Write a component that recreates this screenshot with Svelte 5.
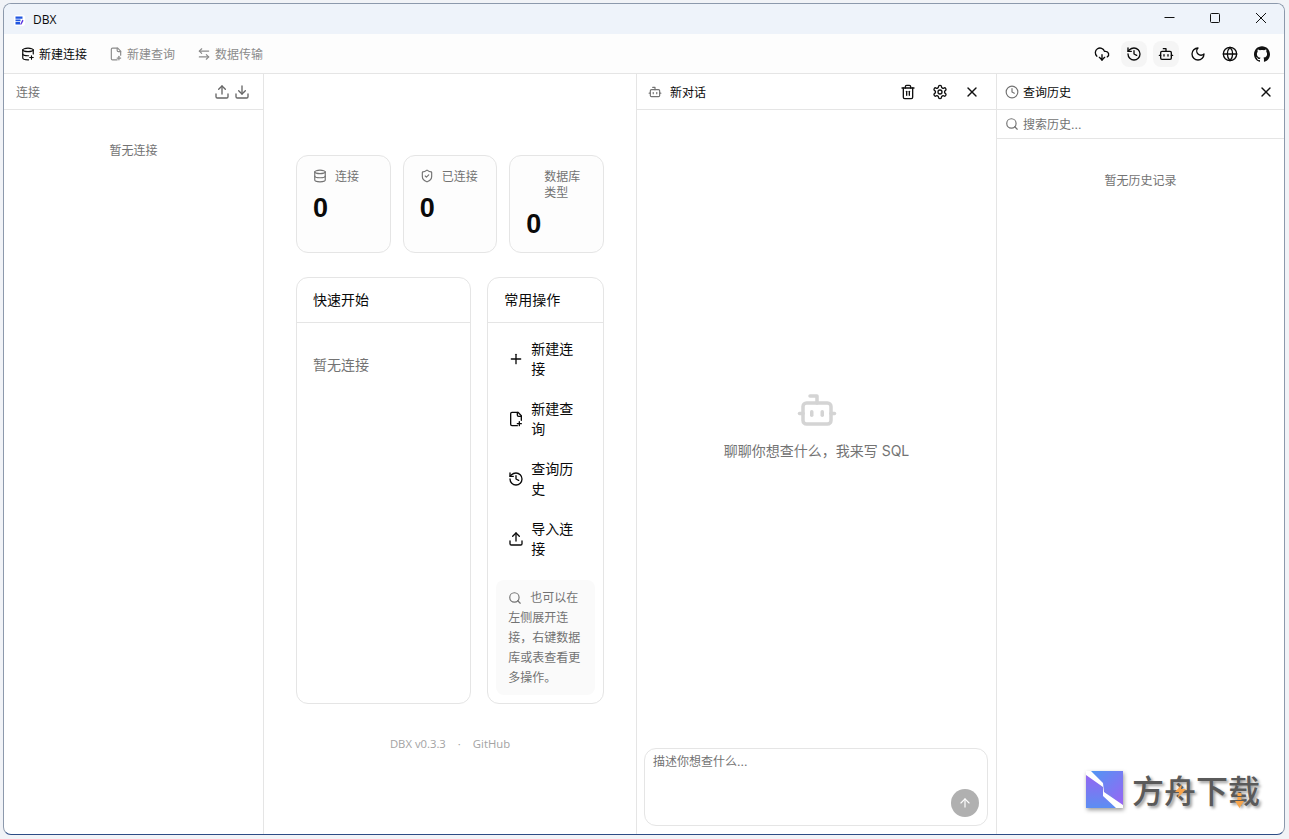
<script>
  const circle = (cx, cy, r) => `M${cx - r} ${cy}a${r} ${r} 0 1 0 ${2 * r} 0a${r} ${r} 0 1 0 ${-2 * r} 0`;
  const ICONS = {
    dbplus: ['M3 5a9 3 0 1 0 18 0a9 3 0 1 0-18 0', 'M3 5v14c0 1.7 4 3 9 3h1', 'M21 5v7', 'M3 12c0 1.7 4 3 9 3h1', 'M18 15v6', 'M15 18h6'],
    db: ['M3 5a9 3 0 1 0 18 0a9 3 0 1 0-18 0', 'M3 5V19A9 3 0 0 0 21 19V5', 'M3 12A9 3 0 0 0 21 12'],
    fileplus: ['M20 14V7l-5-5H6a2 2 0 0 0-2 2v16a2 2 0 0 0 2 2h8', 'M14 2v4a2 2 0 0 0 2 2h4', 'M14 19h6', 'M17 16v6'],
    swap: ['M8 3 4 7l4 4', 'M4 7h16', 'm16 21 4-4-4-4', 'M20 17H4'],
    upload: ['M21 15v4a2 2 0 0 1-2 2H5a2 2 0 0 1-2-2v-4', 'M17 8 12 3 7 8', 'M12 3v12'],
    download: ['M21 15v4a2 2 0 0 1-2 2H5a2 2 0 0 1-2-2v-4', 'M7 10l5 5 5-5', 'M12 15V3'],
    cloud: ['M12 13v8l-4-4', 'm12 21 4-4', 'M4.393 15.269A7 7 0 1 1 15.71 8h1.79a4.5 4.5 0 0 1 2.436 8.284'],
    history: ['M3 12a9 9 0 1 0 9-9 9.75 9.75 0 0 0-6.74 2.74L3 8', 'M3 3v5h5', 'M12 7v5l4 2'],
    bot: ['M12 8V4H8', 'M6 8h12a2 2 0 0 1 2 2v8a2 2 0 0 1-2 2H6a2 2 0 0 1-2-2v-8a2 2 0 0 1 2-2z', 'M2 14h2', 'M20 14h2', 'M15 13v2', 'M9 13v2'],
    moon: ['M12 3a6 6 0 0 0 9 9 9 9 0 1 1-9-9Z'],
    globe: [circle(12, 12, 10), 'M12 2a14.5 14.5 0 0 0 0 20 14.5 14.5 0 0 0 0-20', 'M2 12h20'],
    trash: ['M3 6h18', 'M19 6v14c0 1-1 2-2 2H7c-1 0-2-1-2-2V6', 'M8 6V4c0-1 1-2 2-2h4c1 0 2 1 2 2v2', 'M10 11v6', 'M14 11v6'],
    gear: ['M12.22 2h-.44a2 2 0 0 0-2 2v.18a2 2 0 0 1-1 1.73l-.43.25a2 2 0 0 1-2 0l-.15-.08a2 2 0 0 0-2.73.73l-.22.38a2 2 0 0 0 .73 2.73l.15.1a2 2 0 0 1 1 1.72v.51a2 2 0 0 1-1 1.74l-.15.09a2 2 0 0 0-.73 2.73l.22.38a2 2 0 0 0 2.73.73l.15-.08a2 2 0 0 1 2 0l.43.25a2 2 0 0 1 1 1.73V20a2 2 0 0 0 2 2h.44a2 2 0 0 0 2-2v-.18a2 2 0 0 1 1-1.73l.43-.25a2 2 0 0 1 2 0l.15.08a2 2 0 0 0 2.73-.73l.22-.39a2 2 0 0 0-.73-2.73l-.15-.08a2 2 0 0 1-1-1.74v-.5a2 2 0 0 1 1-1.74l.15-.09a2 2 0 0 0 .73-2.73l-.22-.38a2 2 0 0 0-2.73-.73l-.15.08a2 2 0 0 1-2 0l-.43-.25a2 2 0 0 1-1-1.73V4a2 2 0 0 0-2-2z', circle(12, 12, 3)],
    x: ['M18 6 6 18', 'm6 6 12 12'],
    clock: [circle(12, 12, 10), 'M12 6v6l4 2'],
    search: [circle(11, 11, 8), 'm21 21-4.3-4.3'],
    plus: ['M5 12h14', 'M12 5v14'],
    shield: ['M20 13c0 5-3.5 7.5-7.66 8.95a1 1 0 0 1-.67-.01C7.5 20.5 4 18 4 13V6a1 1 0 0 1 1-1c2 0 4.5-1.2 6.24-2.72a1.17 1.17 0 0 1 1.52 0C14.51 3.81 17 5 19 5a1 1 0 0 1 1 1z', 'm9 12 2 2 4-4'],
    up: ['m5 12 7-7 7 7', 'M12 19V5']
  };
  const GITHUB = 'M12 .297c-6.63 0-12 5.373-12 12 0 5.303 3.438 9.8 8.205 11.385.6.113.82-.258.82-.577 0-.285-.01-1.04-.015-2.04-3.338.724-4.042-1.61-4.042-1.61C4.422 18.07 3.633 17.7 3.633 17.7c-1.087-.744.084-.729.084-.729 1.205.084 1.838 1.236 1.838 1.236 1.07 1.835 2.809 1.305 3.495.998.108-.776.417-1.305.76-1.605-2.665-.3-5.466-1.332-5.466-5.93 0-1.31.465-2.38 1.235-3.22-.135-.303-.54-1.523.105-3.176 0 0 1.005-.322 3.3 1.23.96-.267 1.98-.399 3-.405 1.02.006 2.04.138 3 .405 2.28-1.552 3.285-1.23 3.285-1.23.645 1.653.24 2.873.12 3.176.765.84 1.23 1.91 1.23 3.22 0 4.61-2.805 5.625-5.475 5.92.42.36.81 1.096.81 2.22 0 1.606-.015 2.896-.015 3.286 0 .315.21.69.825.57C20.565 22.092 24 17.592 24 12.297c0-6.627-5.373-12-12-12';

  const tools = [
    { icon: 'dbplus', label: '新建连接' },
    { icon: 'fileplus', label: '新建查询', off: true },
    { icon: 'swap', label: '数据传输', off: true }
  ];
  const actions = [
    { icon: 'plus', label: '新建连接' },
    { icon: 'fileplus', label: '新建查询' },
    { icon: 'history', label: '查询历史' },
    { icon: 'upload', label: '导入连接' }
  ];
</script>

{#snippet icon(name, size = 16)}
  <svg class="ic" width={size} height={size} viewBox="0 0 24 24" fill="none" stroke="currentColor" stroke-width="2" stroke-linecap="round" stroke-linejoin="round">
    {#each ICONS[name] as d}<path {d} />{/each}
  </svg>
{/snippet}

<div class="win">
  <header class="title">
    <div class="title-left">
      <span class="app-logo">
        <svg width="11" height="11" viewBox="0 0 11 11">
          <rect width="11" height="11" rx="2.5" fill="#fff" />
          <path d="M1.5 1.5h7v2.2h-7zM1.5 4.4h5v1.8h-5zM1.5 7h4.5v2.6h-4.5z" fill="#1f55e0" />
          <path d="M8.5 4.6l1 1.2-2 3.8H6z" fill="#5a35e0" />
        </svg>
      </span>
      <span class="app-name">DBX</span>
    </div>
    <div class="controls">
      <span class="ctl"><svg width="12" height="12" viewBox="0 0 12 12"><path d="M1.5 5.5h10" stroke="#111" fill="none" /></svg></span>
      <span class="ctl"><svg width="12" height="12" viewBox="0 0 12 12"><rect x="1.5" y="1.5" width="9" height="9" rx="1" stroke="#111" fill="none" /></svg></span>
      <span class="ctl"><svg width="12" height="12" viewBox="0 0 12 12"><path d="M1 1l10 10M11 1L1 11" stroke="#111" fill="none" /></svg></span>
    </div>
  </header>

  <div class="toolbar">
    <div class="tools">
      {#each tools as t}
        <span class="tool" class:off={t.off}>{@render icon(t.icon, 14)}<span class="nudge">{t.label}</span></span>
      {/each}
    </div>
    <div class="tb-right">
      <span class="tb-btn">{@render icon('cloud')}</span>
      <span class="tb-btn on">{@render icon('history')}</span>
      <span class="tb-btn on">{@render icon('bot')}</span>
      <span class="tb-btn">{@render icon('moon')}</span>
      <span class="tb-btn">{@render icon('globe')}</span>
      <span class="tb-btn">
        <svg width="16" height="16" viewBox="0 0 24 24" fill="#111"><path d={GITHUB} /></svg>
      </span>
    </div>
  </div>

  <div class="cols">
    <aside class="side">
      <div class="phead side-head">
        <span class="muted nudge2">连接</span>
        <span class="head-icons muted2">{@render icon('upload')}{@render icon('download')}</span>
      </div>
      <div class="side-empty">暂无连接</div>
    </aside>

    <main class="main">
      <div class="stats">
        <div class="stat">
          <div class="stat-label">{@render icon('db', 14)}<span class="lab">连接</span></div>
          <div class="stat-value">0</div>
        </div>
        <div class="stat">
          <div class="stat-label">{@render icon('shield', 14)}<span class="lab">已连接</span></div>
          <div class="stat-value">0</div>
        </div>
        <div class="stat">
          <div class="stat-label"><span class="ghost"></span><span class="lab">数据库类型</span></div>
          <div class="stat-value">0</div>
        </div>
      </div>

      <div class="panels">
        <section class="panel">
          <h3>快速开始</h3>
          <div class="quick">暂无连接</div>
        </section>
        <section class="panel">
          <h3>常用操作</h3>
          <div class="acts">
            {#each actions as a}
              <div class="act">{@render icon(a.icon, 16)}<span>{a.label}</span></div>
            {/each}
            <p class="hint"><span class="hint-ic">{@render icon('search', 14)}</span>也可以在左侧展开连接，右键数据库或表查看更多操作。</p>
          </div>
        </section>
      </div>

      <footer class="foot"><span>DBX v0.3.3</span><span>·</span><span>GitHub</span></footer>
    </main>

    <section class="chat">
      <div class="phead chat-head">
        <span class="chat-title"><span class="muted">{@render icon('bot', 14)}</span><span class="nudge">新对话</span></span>
        <span class="chat-btns">{@render icon('trash')}{@render icon('gear')}{@render icon('x')}</span>
      </div>
      <div class="chat-body">
        <span class="big-bot">{@render icon('bot', 42)}</span>
        <p>聊聊你想查什么，我来写 SQL</p>
      </div>
      <div class="chat-input">
        <div class="box">
          <textarea placeholder="描述你想查什么..."></textarea>
          <span class="send">{@render icon('up', 14)}</span>
        </div>
      </div>
    </section>

    <aside class="hist">
      <div class="phead">
        <span class="chat-title hist-title"><span class="muted">{@render icon('clock', 14)}</span><span class="nudge">查询历史</span></span>
        <span class="hist-x">{@render icon('x')}</span>
      </div>
      <div class="hist-search"><span class="muted">{@render icon('search', 14)}</span><span class="muted nudge">搜索历史...</span></div>
      <div class="hist-empty">暂无历史记录</div>
    </aside>
  </div>

  <div class="mark">
    <svg class="mark-logo" width="37" height="37" viewBox="0 0 37 37">
      <defs>
        <linearGradient id="mkA" x1="0" y1="0" x2="1" y2="1">
          <stop offset="0" stop-color="#4b9af3" />
          <stop offset="1" stop-color="#9d62f3" />
        </linearGradient>
        <linearGradient id="mkB" x1="0" y1="0" x2="0" y2="1">
          <stop offset="0" stop-color="#9a62f2" />
          <stop offset="1" stop-color="#5c8ef2" />
        </linearGradient>
      </defs>
      <path d="M0 0h37v37z" fill="url(#mkA)" />
      <path d="M0 0v37h37z" fill="url(#mkB)" />
      <path d="M0 0h5l12 12 1 9 19 13v3h-7L17 25v-9L0 4z" fill="#fff" />
    </svg>
    <span class="mark-text">方舟下载</span>
    <svg class="bolt" width="11" height="14" viewBox="0 0 11 14"><path d="M7 0L0 8h4l-1 6 8-9H6z" fill="#f6a44c" /></svg>
    <svg class="arrow" width="9" height="15" viewBox="0 0 9 15"><path d="M2.5 0h4v3h-4zM2.5 4h4v3h-4zM0 8h9l-4.5 7z" fill="#f6a44c" /></svg>
  </div>
</div>

<style>
  :global(body) {
    margin: 0;
    background: #f1f3f7;
    overflow: hidden;
  }
  .ic { display: block; flex: none; }
  .nudge { margin-top: 2px; }
  .nudge2 { margin-top: 3px; }

  .win {
    position: relative;
    box-sizing: border-box;
    width: 1282px;
    height: 832px;
    margin: 3px 0 0 3px;
    display: flex;
    flex-direction: column;
    background: #fff;
    border: 1px solid #8c99ac;
    border-bottom-color: #2c4c85;
    border-radius: 8px;
    overflow: hidden;
    font-family: "Inter", "Noto Sans CJK SC", sans-serif;
    font-size: 12px;
    line-height: 16px;
    color: #0a0a0a;
  }

  .title {
    flex: none;
    height: 30px;
    display: flex;
    justify-content: space-between;
    background: #eef3fa;
  }
  .title-left { display: flex; align-items: center; padding-left: 10px; }
  .app-logo { display: flex; margin-top: 2px; }
  .app-name { margin-left: 8px; font-family: "Open Sans", sans-serif; margin-top: 1px; }
  .controls { display: flex; }
  .ctl { width: 46px; display: flex; align-items: center; justify-content: center; padding-bottom: 2px; box-sizing: border-box; }

  .toolbar {
    flex: none;
    height: 40px;
    box-sizing: border-box;
    display: flex;
    justify-content: space-between;
    align-items: center;
    padding: 0 9px;
    background: #fdfdfd;
    border-bottom: 1px solid #e5e5e5;
  }
  .tools { display: flex; gap: 6px; }
  .tool { display: flex; align-items: center; gap: 4px; padding: 4px 8px; }
  .tool.off { color: #8b8b8b; }
  .tb-right { display: flex; gap: 6px; }
  .tb-btn { width: 26px; height: 26px; display: flex; align-items: center; justify-content: center; border-radius: 8px; }
  .tb-btn.on { background: #f5f5f5; }

  .cols {
    flex: 1;
    min-height: 0;
    display: grid;
    grid-template-columns: 260px 373px 360px 287px;
  }
  .side, .main, .chat { border-right: 1px solid #e5e5e5; }
  .side, .main, .chat, .hist { box-sizing: border-box; min-width: 0; }

  .phead {
    height: 36px;
    box-sizing: border-box;
    display: flex;
    align-items: center;
    justify-content: space-between;
    padding: 0 12px;
    border-bottom: 1px solid #e5e5e5;
  }
  .side-head { padding-right: 13px; }
  .muted { color: #737373; }
  .muted2 { color: #666; }
  .head-icons { display: flex; gap: 4px; }
  .side-empty { margin-top: 33px; text-align: center; color: #737373; }

  .main { padding: 81px 32px 0; }
  .stats { display: grid; grid-template-columns: repeat(3, 1fr); gap: 12px; }
  .stat {
    padding: 12px 16px;
    border: 1px solid #e5e5e5;
    border-radius: 12px;
    background: #fdfdfd;
  }
  .stat-label { display: flex; gap: 8px; align-items: flex-start; color: #737373; }
  .stat-label .ic { margin-top: 1px; }
  .lab { margin: 1px 0 -1px; }
  .ghost { width: 10px; flex: none; }
  .stat-value {
    margin-top: 8px;
    font: 700 27px/32px "Liberation Sans", sans-serif;
    color: #0a0a0a;
  }

  .panels {
    margin-top: 24px;
    display: grid;
    grid-template-columns: 3fr 2fr;
    gap: 16px;
  }
  .panel {
    border: 1px solid #e5e5e5;
    border-radius: 12px;
    overflow: hidden;
    min-width: 0;
  }
  .panel h3 {
    margin: 0;
    padding: 12px 16px;
    font-size: 14px;
    line-height: 20px;
    font-weight: 400;
    border-bottom: 1px solid #e5e5e5;
  }
  .quick { padding: 32px 16px; font-size: 14px; line-height: 20px; color: #737373; }
  .acts { padding: 8px; display: flex; flex-direction: column; gap: 4px; }
  .act {
    display: flex;
    align-items: center;
    gap: 7px;
    padding: 8px 12px;
    font-size: 14px;
    line-height: 20px;
  }
  .hint {
    margin: 9px 0 0;
    padding: 8px 12px 7px;
    background: #fafafa;
    border-radius: 8px;
    line-height: 20px;
    color: #737373;
  }
  .hint-ic { display: inline-block; vertical-align: -3px; margin-right: 8px; color: #737373; }
  .hint-ic .ic { display: block; }

  .foot {
    margin-top: 32px;
    display: flex;
    justify-content: center;
    gap: 12px;
    font-family: "Open Sans", sans-serif;
    font-size: 11.3px;
    color: #a3a3a3;
  }

  .chat { display: flex; flex-direction: column; }
  .chat-head { flex: none; padding-left: 11px; }
  .chat-title { display: flex; align-items: center; gap: 8px; }
  .chat-btns { display: flex; gap: 16px; color: #111; padding-right: 4px; }
  .chat-body {
    flex: 1;
    min-height: 0;
    display: flex;
    flex-direction: column;
    align-items: center;
    justify-content: center;
  }
  .big-bot { color: #d4d4d4; }
  .chat-body p { margin: 10px 0 0; font-size: 14px; line-height: 20px; color: #737373; }
  .chat-input { flex: none; padding: 8px 8px 8px 7px; }
  .box { position: relative; height: 78px; box-sizing: border-box; border: 1px solid #e5e5e5; border-radius: 12px; }
  textarea {
    display: block;
    width: 100%;
    height: 100%;
    box-sizing: border-box;
    border: 0;
    padding: 5px 8px;
    background: transparent;
    resize: none;
    outline: none;
    font: inherit;
    line-height: 16px;
  }
  textarea::placeholder { color: #737373; opacity: 1; }
  .send {
    position: absolute;
    right: 8px;
    bottom: 8px;
    width: 28px;
    height: 28px;
    border-radius: 50%;
    background: #b0b0b0;
    color: #fff;
    display: flex;
    align-items: center;
    justify-content: center;
  }

  .hist { display: flex; flex-direction: column; }
  .hist-title { gap: 4px; margin-left: -4px; }
  .hist-x { margin-right: -2px; color: #111; }
  .hist-search {
    height: 29px;
    box-sizing: border-box;
    display: flex;
    align-items: center;
    gap: 4px;
    padding: 0 8px;
    border-bottom: 1px solid #e5e5e5;
  }
  .hist-empty { margin-top: 34px; text-align: center; color: #737373; }

  .mark {
    position: absolute;
    right: 24px;
    bottom: 26px;
    display: flex;
    align-items: center;
    gap: 9px;
    pointer-events: none;
  }
  .mark-logo { display: block; filter: drop-shadow(1px 2px 2px rgba(0, 0, 0, .4)); }
  .mark-text {
    font: 500 32px/38px "Noto Sans CJK SC", sans-serif;
    color: #5a5a5a;
    text-shadow: 2px 2px 3px rgba(0, 0, 0, .4);
  }
  .bolt { position: absolute; left: 89px; top: 14px; }
  .arrow { position: absolute; left: 149px; top: 23px; }
</style>
